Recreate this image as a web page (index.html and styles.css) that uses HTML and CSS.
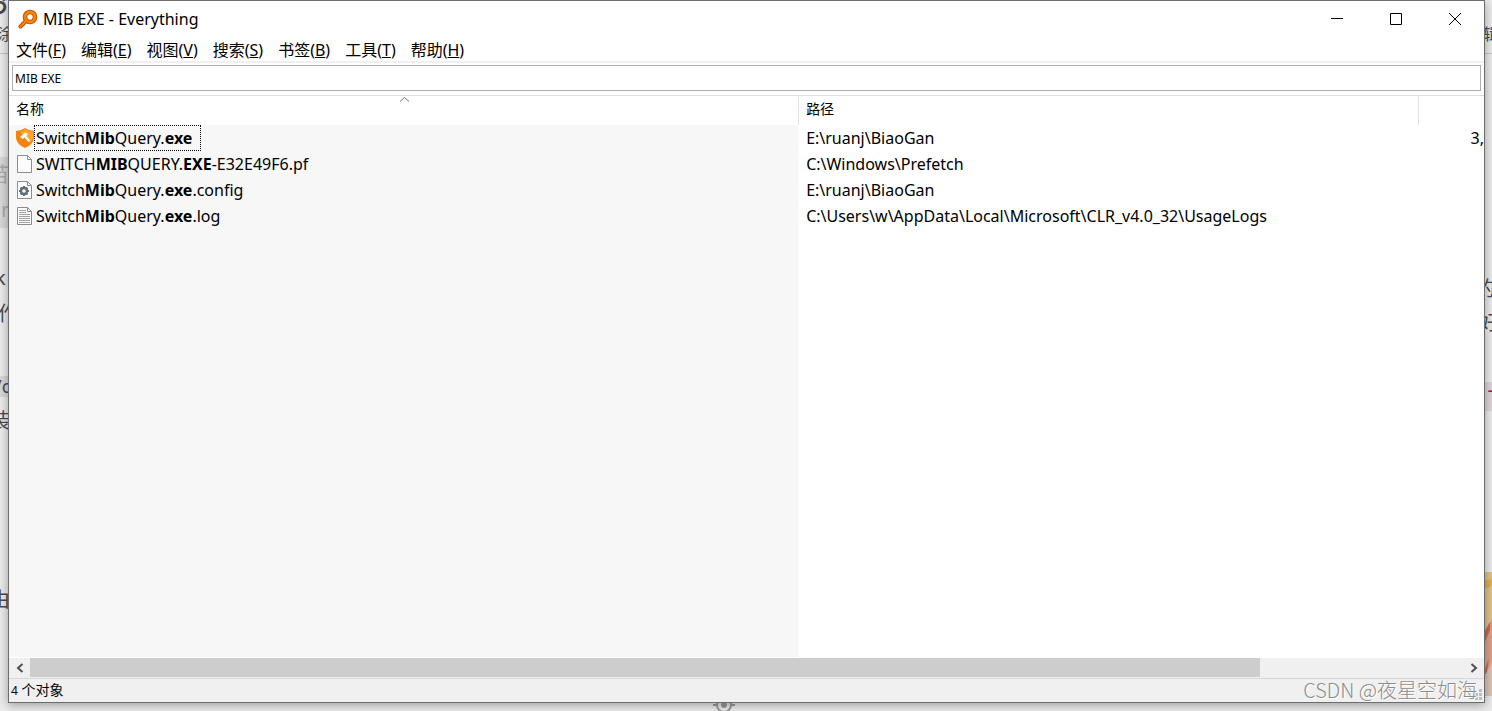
FILE: index.html
```
<!DOCTYPE html>
<html lang="zh-CN">
<head>
    <meta charset="UTF-8">
    <meta name="viewport" content="width=device-width, initial-scale=1.0">
    <title>MIB EXE - Everything</title>
    <link rel="stylesheet" href="styles.css">
</head>
<body>
    <!-- page lying behind the window -->
    <div class="behind" aria-hidden="true">
        <span class="shade shade-left"></span>
        <span class="shade shade-code"></span>
        <span class="shade shade-right"></span>
        <span class="rule rule-left"></span>
        <span class="rule rule-right"></span>
        <span class="bit b1">づ</span>
        <span class="bit b2">涂</span>
        <span class="bit b3">苗</span>
        <span class="bit b4">r</span>
        <span class="bit b5">k</span>
        <span class="bit b6">作</span>
        <span class="bit b7">/c</span>
        <span class="bit b8">装</span>
        <span class="bit b9">由</span>
        <span class="bit r1">辑</span>
        <span class="bit r2">的</span>
        <span class="bit r3">好</span>
        <span class="bit r4">-</span>
        <svg class="photo" viewBox="0 0 8 124" preserveAspectRatio="none">
            <rect width="8" height="124" fill="#dfc48a"/>
            <path d="M0 8 Q5 10 7 5 L8 12 Q4 18 0 15Z" fill="#e2ad55"/>
            <path d="M0 64 L8 46 V124 H0Z" fill="#dda08a"/>
            <path d="M0 60 L6 50 L6 58 L0 72Z M0 100 L5 86 L3 100 L0 104Z" fill="#cf6a45"/>
            <path d="M0 106 L8 90 V124 H0Z" fill="#dcc3b8"/>
        </svg>
        <svg class="target" viewBox="0 0 22 22">
            <circle cx="11" cy="11" r="7" fill="none" stroke="#9a9a9a" stroke-width="2"/>
            <circle cx="11" cy="11" r="3" fill="#9a9a9a"/>
            <path d="M0 11H5M17 11H22M11 0V5M11 17V22" stroke="#9a9a9a" stroke-width="2"/>
        </svg>
    </div>

    <main class="window">
        <header class="titlebar">
            <svg class="logo" viewBox="0 0 20 20">
                <path d="M8.500 11.500L2.500 17.500" stroke="#b04f00" stroke-width="4" stroke-linecap="round"/>
                <circle cx="12" cy="8" r="5" fill="none" stroke="#b04f00" stroke-width="4.600"/>
                <circle cx="12" cy="8" r="5" fill="none" stroke="#ff8204" stroke-width="2.800"/>
                <path d="M8.500 11.500L2.500 17.500" stroke="#ff8204" stroke-width="2.200" stroke-linecap="round"/>
            </svg>
            <h1>MIB EXE - Everything</h1>
            <div class="controls">
                <button aria-label="最小化"><svg viewBox="0 0 12 12"><path d="M0 5.500H12"/></svg></button>
                <button aria-label="最大化"><svg viewBox="0 0 12 12"><path d="M.5 .5H11.500V11.500H.5Z"/></svg></button>
                <button aria-label="关闭"><svg viewBox="0 0 12 12"><path d="M0 0L12 12M12 0L0 12"/></svg></button>
            </div>
        </header>

        <nav class="menubar">
            <button>文件(<u>F</u>)</button>
            <button>编辑(<u>E</u>)</button>
            <button>视图(<u>V</u>)</button>
            <button>搜索(<u>S</u>)</button>
            <button>书签(<u>B</u>)</button>
            <button>工具(<u>T</u>)</button>
            <button>帮助(<u>H</u>)</button>
        </nav>

        <div class="search">
            <input type="text" value="MIB EXE" aria-label="搜索">
        </div>

        <div class="list">
            <table>
                <colgroup>
                    <col class="col-name">
                    <col class="col-path">
                    <col class="col-size">
                </colgroup>
                <thead>
                    <tr>
                        <th>名称<svg class="sort" viewBox="0 0 9 5"><path d="M0 4.500L4.500 .5L9 4.500"/></svg></th>
                        <th>路径</th>
                        <th></th>
                    </tr>
                </thead>
                <tbody>
                    <tr>
                        <td>
                            <div class="file">
                                <svg viewBox="0 0 18 20">
                                    <path d="M9 0Q13 3 18 3V10Q17 17 9 20Q1 17 0 10V3Q5 3 9 0Z" fill="#f5820a"/>
                                    <path d="M9 1Q13 4 17 4V10Q16 13 14 15L4 4Q7 3 9 1Z" fill="#ffa62b"/>
                                    <path d="M4 9L9 4.500L12 6L10.500 8L14 12.500L12.500 14L8.500 9.500L6.500 11Z" fill="#fff"/>
                                </svg>
                                <span class="focused">Switch<b>Mib</b>Query.<b>exe</b></span>
                            </div>
                        </td>
                        <td>E:\ruanj\BiaoGan</td>
                        <td class="size">3,</td>
                    </tr>
                    <tr>
                        <td>
                            <div class="file">
                                <svg viewBox="0 0 18 20">
                                    <path d="M1.500 1.500H11.500L15.500 5.500V18.500H1.500Z" fill="#fbfbfb" stroke="#8c8c8c"/>
                                    <path d="M11.500 1.500V5.500H15.500" fill="none" stroke="#8c8c8c"/>
                                </svg>
                                <span>SWITCH<b>MIB</b>QUERY.<b>EXE</b>-E32E49F6.pf</span>
                            </div>
                        </td>
                        <td>C:\Windows\Prefetch</td>
                        <td></td>
                    </tr>
                    <tr>
                        <td>
                            <div class="file">
                                <svg viewBox="0 0 18 20">
                                    <path d="M1.500 1.500H11.500L15.500 5.500V18.500H1.500Z" fill="#fbfbfb" stroke="#8c8c8c"/>
                                    <path d="M11.500 1.500V5.500H15.500" fill="none" stroke="#8c8c8c"/>
                                    <circle cx="8" cy="11" r="3" fill="none" stroke="#5f7078" stroke-width="2.400"/>
                                    <path d="M8 6V8M8 14V16M3 11H5M11 11H13M4.500 7.500L6 9M10 13L11.500 14.500M11.500 7.500L10 9M6 13L4.500 14.500" stroke="#5f7078" stroke-width="2"/>
                                </svg>
                                <span>Switch<b>Mib</b>Query.<b>exe</b>.config</span>
                            </div>
                        </td>
                        <td>E:\ruanj\BiaoGan</td>
                        <td></td>
                    </tr>
                    <tr>
                        <td>
                            <div class="file">
                                <svg viewBox="0 0 18 20">
                                    <path d="M1.500 1.500H11.500L15.500 5.500V18.500H1.500Z" fill="#fbfbfb" stroke="#8c8c8c"/>
                                    <path d="M11.500 1.500V5.500H15.500" fill="none" stroke="#8c8c8c"/>
                                    <path d="M3 4.500H10M3 6.500H10M3 8.500H14M3 10.500H14M3 12.500H14M3 14.500H14M3 16.500H14" stroke="#a2a2a2"/>
                                </svg>
                                <span>Switch<b>Mib</b>Query.<b>exe</b>.log</span>
                            </div>
                        </td>
                        <td>C:\Users\w\AppData\Local\Microsoft\CLR_v4.0_32\UsageLogs</td>
                        <td></td>
                    </tr>
                </tbody>
            </table>
        </div>

        <div class="scrollbar">
            <button aria-label="向左滚动"><svg viewBox="0 0 8 10"><path d="M6.500 1L2 5L6.500 9"/></svg></button>
            <div class="track"><div class="thumb"></div></div>
            <button aria-label="向右滚动"><svg viewBox="0 0 8 10"><path d="M1.500 1L6 5L1.500 9"/></svg></button>
        </div>

        <footer class="status">
            <span><small>4</small> 个对象</span>
            <svg class="grip" viewBox="0 0 11 11">
                <path d="M8 0H11V3H8ZM4 4H7V7H4ZM8 4H11V7H8ZM0 8H3V11H0ZM4 8H7V11H4ZM8 8H11V11H8Z" fill="#bdbdbd"/>
            </svg>
        </footer>
    </main>
    <div class="watermark">CSDN @夜星空如海</div>
</body>
</html>
```

FILE: styles.css
```
* {
    box-sizing: border-box;
}
body {
    margin: 0;
    height: 100vh;
    padding: 0 7px 8px 8px;
    position: relative;
    overflow: hidden;
    display: flex;
    background: #ececec;
    color: #000;
    font-family: "Noto Sans", "Noto Sans CJK SC", sans-serif;
    font-size: 16px;
}
button {
    border: none;
    background: none;
    padding: 0;
    font: inherit;
    color: inherit;
}

/* window */
.window {
    flex: 1;
    min-width: 0;
    position: relative;
    display: flex;
    flex-direction: column;
    background: #fff;
    border: 1px solid #6c6c6c;
    box-shadow: 0 2px 10px rgba(0, 0, 0, 0.35);
}
.titlebar {
    display: flex;
    align-items: center;
    height: 36px;
    padding-left: 9px;
}
.logo {
    width: 20px;
    height: 20px;
    margin-right: 5px;
}
.titlebar h1 {
    margin: 0;
    font-size: 16px;
    font-weight: normal;
}
.controls {
    margin-left: auto;
    display: flex;
}
.controls button {
    width: 59px;
    height: 36px;
    display: flex;
    align-items: center;
    justify-content: center;
}
.controls svg {
    width: 12px;
    height: 12px;
    fill: none;
    stroke: #000;
}
.menubar {
    display: flex;
    gap: 15px;
    height: 26px;
    padding-left: 7px;
    border-bottom: 2px solid #f0f0f0;
}
.menubar button {
    line-height: 26px;
}
.search {
    padding: 2px 3px 4px;
    border-bottom: 1px solid #dcdcdc;
}
.search input {
    display: block;
    width: 100%;
    height: 26px;
    border: 1px solid #adadb3;
    padding: 0 2px;
    font-family: inherit;
    font-size: 12px;
    color: #000;
    outline: none;
}

/* results */
.list {
    flex: 1;
    min-height: 0;
    overflow: hidden;
    background: linear-gradient(to right, #f7f7f7 53.5%, #fff 53.5%);
    border-bottom: 1px solid #fff;
}
table {
    width: 100%;
    table-layout: fixed;
    border-collapse: collapse;
}
.col-name {
    width: 53.5%;
}
.col-path {
    width: 42%;
}
th {
    position: relative;
    height: 29px;
    padding: 0 8px 4px;
    background: #fff;
    text-align: left;
    font-size: 14px;
    font-weight: normal;
    line-height: 20px;
    box-shadow: inset 1px 0 #e2e2e2;
}
th:first-child {
    padding-left: 7px;
    box-shadow: none;
}
.sort {
    position: absolute;
    top: 1px;
    left: 50%;
    width: 9px;
    height: 5px;
    margin-left: -4px;
    fill: none;
    stroke: #707070;
}
td {
    height: 26px;
    padding: 0 8px;
    line-height: 24px;
    white-space: nowrap;
}
td:first-child {
    padding-left: 7px;
}
.file {
    display: flex;
    align-items: center;
}
.file svg {
    width: 18px;
    height: 20px;
}
.file span {
    padding: 0 8px 0 1px;
    border: 1px solid transparent;
}
.file .focused {
    border: 1px dotted #000;
}
.size {
    padding: 0;
    text-align: right;
}

/* bottom */
.scrollbar {
    display: flex;
    height: 20px;
    background: #f0f0f0;
}
.scrollbar button {
    width: 21px;
    display: flex;
    align-items: center;
    justify-content: center;
}
.scrollbar svg {
    width: 8px;
    height: 10px;
    fill: none;
    stroke: #505050;
    stroke-width: 2;
}
.track {
    flex: 1;
}
.thumb {
    width: 85.8%;
    height: 19px;
    background: #cdcdcd;
}
.status {
    display: flex;
    justify-content: space-between;
    align-items: flex-end;
    height: 24px;
    padding: 0 2px;
    background: #f0f0f0;
    border-top: 1px solid #d7d7d7;
    font-size: 14px;
    line-height: 23px;
}
.status small {
    font-size: 12px;
}
.grip {
    width: 11px;
    height: 11px;
    margin-bottom: 2px;
}
.watermark {
    position: absolute;
    right: 15px;
    bottom: 7px;
    font-family: "Noto Sans CJK SC", sans-serif;
    font-size: 20px;
    font-weight: 300;
    line-height: 28px;
    color: #8c8c8c;
    text-shadow: 1px 1px #fff;
}

/* page behind the window */
.behind {
    position: absolute;
    inset: 0;
    overflow: hidden;
    color: #4a4a52;
}
.behind > * {
    position: absolute;
}
.bit {
    font-size: 20px;
    line-height: 24px;
    white-space: nowrap;
}
.b1 { left: -12px; top: -4px; font-weight: bold; }
.b2 { left: -3px; top: 22px; font-size: 16px; }
.b3 { left: -11px; top: 163px; color: #aaa; }
.b4 { left: 1px; top: 198px; color: #aaa; }
.b5 { left: -5px; top: 266px; }
.b6 { left: -2px; top: 302px; }
.b7 { left: -5px; top: 374px; font-size: 18px; }
.b8 { left: -10px; top: 409px; }
.b9 { left: -10px; top: 588px; }
.r1 { right: -7px; top: 22px; font-size: 16px; }
.r2 { right: -3px; top: 277px; }
.r3 { right: -7px; top: 311px; }
.r4 { right: -2px; top: 378px; color: #b3164b; }
.shade {
    width: 10px;
    background: #d9d9d9;
}
.shade-left { left: 0; top: 157px; height: 71px; }
.shade-code { left: 0; top: 376px; height: 21px; }
.shade-right { right: 0; top: 382px; height: 29px; background: #dfd6da; }
.rule {
    width: 10px;
    height: 1px;
    background: #c4c4c4;
}
.rule-left { left: 0; top: 53px; }
.rule-right { right: 0; top: 53px; }
.photo {
    right: 0;
    top: 572px;
    width: 8px;
    height: 124px;
}
.target {
    left: 713px;
    top: 694px;
    width: 22px;
    height: 22px;
}
```
